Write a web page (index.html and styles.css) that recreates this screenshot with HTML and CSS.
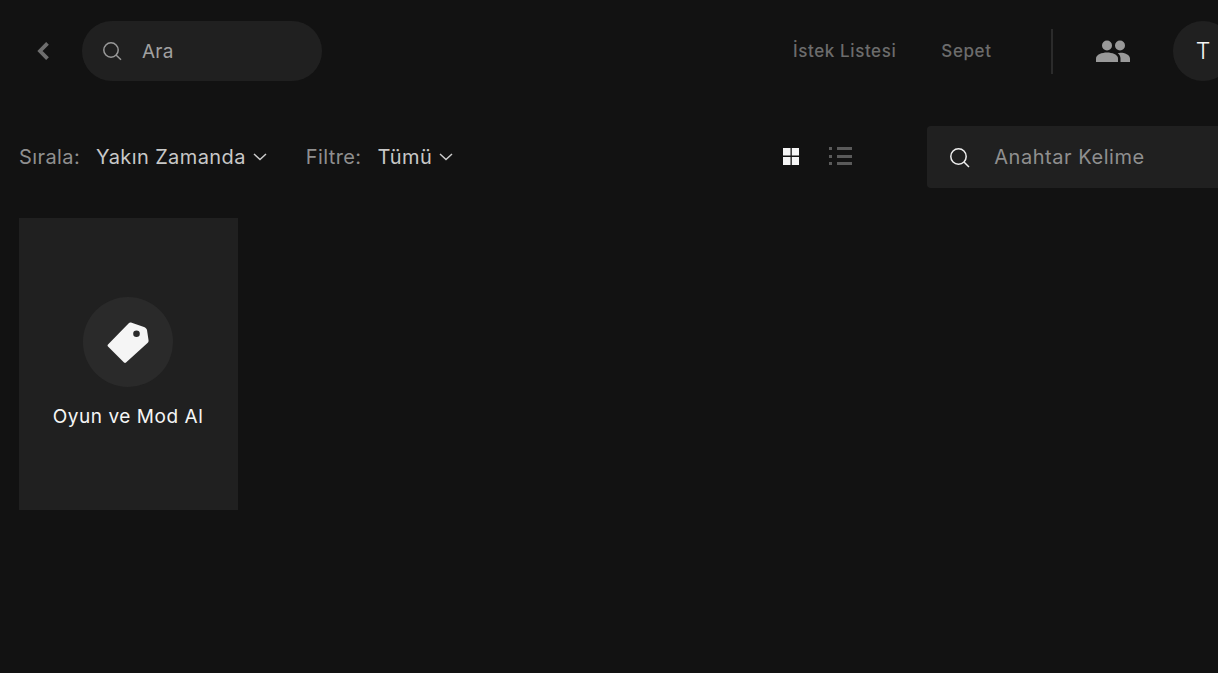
FILE: index.html
```html
<!DOCTYPE html>
<html lang="tr">
<head>
<meta charset="utf-8">
<title>Oyun ve Mod Al</title>
<link rel="stylesheet" href="styles.css">
</head>
<body>
<div class="page">
  <header class="topbar">
    <button class="back" aria-label="Geri">
      <svg width="13" height="18" viewBox="0 0 13 18"><path d="M10.500 1.300 3 9l7.500 7.700" fill="none" stroke="#6e6e6e" stroke-width="3.800"/></svg>
    </button>
    <div class="pill-search">
      <svg width="20" height="20" viewBox="0 0 20 20"><circle cx="9" cy="9" r="7.200" fill="none" stroke="#999" stroke-width="1.500"/><path d="m14 14 5 4.800" stroke="#999" stroke-width="1.500"/></svg>
      <span>Ara</span>
    </div>
    <nav class="links">
      <a class="link">İstek Listesi</a>
      <a class="link">Sepet</a>
    </nav>
    <div class="divider"></div>
    <svg class="friends" width="34" height="22" viewBox="0 0 34 22"><circle cx="11" cy="5.500" r="5" fill="#999"/><circle cx="24" cy="5.500" r="5" fill="#999"/><path d="M0 22v-3.500C0 14.500 6 12.500 11 12.500s11 2 11 6V22Z" fill="#999"/><path d="M24.500 22v-3.500c0-2.200-1-4-2.800-5.300.8-.3 1.800-.5 2.800-.5 4 0 9.500 2 9.500 5.800V22Z" fill="#999"/></svg>
    <div class="avatar">T</div>
  </header>

  <section class="toolbar">
    <span class="label">Sırala:</span>
    <span class="value">Yakın Zamanda</span>
    <svg class="caret" width="14" height="8" viewBox="0 0 14 8"><path d="m1 1 6 5.500L13 1" fill="none" stroke="#ccc" stroke-width="1.500"/></svg>
    <span class="label filter">Filtre:</span>
    <span class="value">Tümü</span>
    <svg class="caret" width="14" height="8" viewBox="0 0 14 8"><path d="m1 1 6 5.500L13 1" fill="none" stroke="#ccc" stroke-width="1.500"/></svg>
    <svg class="grid-icon" width="16" height="17" viewBox="0 0 16 17"><path d="M0 0h7.500v7.500H0zM8.800 0H16v7.500H8.800zM0 9h7.500v8H0zM8.800 9H16v8H8.800z" fill="#f5f5f5"/></svg>
    <svg class="list-icon" width="23" height="18" viewBox="0 0 23 18"><path d="M0 0h3v3H0zM0 8h3v3H0zM0 15h3v3H0zM8 0h15v3H8zM8 8h15v3H8zM8 15h15v3H8z" fill="#5a5a5a"/></svg>
    <div class="key-search">
      <svg width="21" height="21" viewBox="0 0 21 21"><circle cx="9.500" cy="9.500" r="7.700" fill="none" stroke="#eee" stroke-width="1.500"/><path d="m15 15 5 5" stroke="#eee" stroke-width="1.500"/></svg>
      <span>Anahtar Kelime</span>
    </div>
  </section>

  <main class="cards">
    <article class="card">
      <div class="card-circle">
        <svg width="42" height="41" viewBox="0 0 42 41"><path fill-rule="evenodd" d="M24 .5 37 5c1.500.600 2.500 1.500 3 3l1.500 10c.2 1.300 0 2-1 3L19 40.500c-.6.600-1.300.6-2 0L1 24.500c-.6-.6-.6-1.300 0-2L21.500 1.500C22.500.500 23 .2 24 .5ZM29.500 8.500a3.300 3.300 0 1 0 0 6.600 3.300 3.300 0 0 0 0-6.600Z" fill="#f5f5f5"/></svg>
      </div>
      <div class="card-title">Oyun ve Mod Al</div>
    </article>
  </main>
</div>
</body>
</html>
```
FILE: styles.css
```css
* { box-sizing: border-box; }
html, body { margin: 0; height: 100%; overflow: hidden; background: #121212; }
body { font-family: Inter, "Noto Sans", sans-serif; white-space: nowrap; }
.page { width: 1233px; }

.topbar { display: flex; align-items: center; height: 60px; margin-top: 21px; padding-left: 37px; }
.back { flex: none; display: flex; width: 13px; height: 18px; margin: 0 32px 0 0; padding: 0; background: none; border: 0; }
.pill-search { flex: none; display: flex; align-items: center; gap: 20px; width: 240px; height: 60px; padding-left: 20px; border-radius: 30px; background: #202020; color: #a0a0a0; font-size: 19px; letter-spacing: .2px; }
.links { flex: none; display: flex; gap: 45px; margin-left: 471px; width: 198px; }
.link { color: #6c6c6c; font-size: 17px; font-weight: 500; letter-spacing: .6px; }
.divider { flex: none; width: 2px; height: 45px; margin-left: 60px; background: #2b2b2b; }
.friends { flex: none; margin-left: 43px; }
.avatar { flex: none; display: flex; align-items: center; justify-content: center; width: 60px; height: 60px; margin-left: 43px; border-radius: 50%; background: #202020; color: #f5f5f5; font-size: 23px; font-weight: 300; }

.toolbar { display: flex; align-items: center; height: 62px; margin-top: 45px; padding-left: 19px; font-size: 20px; letter-spacing: .4px; }
.label { color: #8f8f8f; margin-right: 16px; }
.value { color: #c8c8c8; }
.caret { flex: none; margin-left: 7px; }
.filter { margin-left: 39px; }
.grid-icon { flex: none; margin: 0 0 1px 330px; }
.list-icon { flex: none; margin: 0 0 2px 30px; }
.key-search { flex: none; display: flex; align-items: center; gap: 24px; width: 320px; height: 62px; margin-left: 75px; padding-left: 22px; border-radius: 4px; background: #202020; color: #8f8f8f; letter-spacing: .55px; }

.cards { padding: 30px 0 0 19px; }
.card { display: flex; flex-direction: column; align-items: center; width: 219px; height: 292px; padding: 79px 1px 0 0; background: #202020; }
.card-circle { display: flex; align-items: center; justify-content: center; width: 90px; height: 90px; border-radius: 50%; background: #2a2a2a; }
.card-title { margin-top: 18px; color: #f5f5f5; font-size: 19px; line-height: 24px; letter-spacing: .55px; }
```
